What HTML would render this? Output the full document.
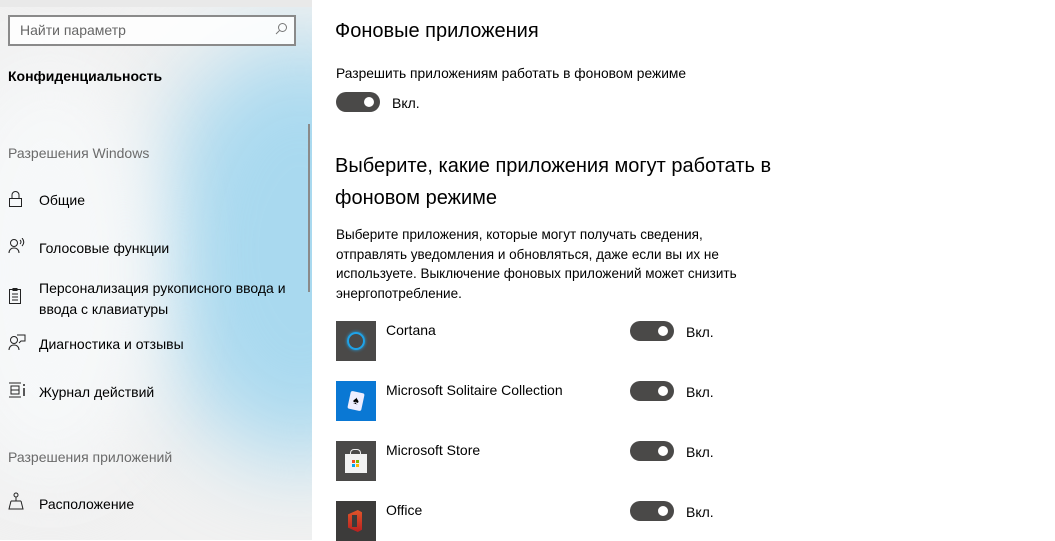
<!DOCTYPE html><html><head><meta charset="utf-8"><style>
body{margin:0;width:1055px;height:540px;overflow:hidden;font-family:"Liberation Sans","Noto Sans CJK SC",sans-serif;background:#fff;position:relative;color:#000}
#side{position:absolute;left:0;top:0;width:312px;height:540px;background:#f1f1f1;overflow:hidden}
#blob{position:absolute;left:150px;top:40px;width:300px;height:420px;border-radius:50%;background:#a9d9ef;filter:blur(45px)}
#blob2{position:absolute;left:-60px;top:60px;width:220px;height:420px;border-radius:50%;background:#f6f8f9;filter:blur(40px)}
.a{position:absolute;font-size:14px;white-space:nowrap}
.g{color:#6b6b6b}
.ic{position:absolute;left:8px}
.tg{position:absolute;width:44px;height:20px;border-radius:10px;background:#4a4948}
.tg:after{content:"";position:absolute;right:6px;top:5px;width:10px;height:10px;border-radius:50%;background:#fff}
.app{position:absolute;left:336px;width:40px;height:40px}
</style></head><body>
<div id="side"><div id="blob"></div><div id="blob2"></div>
<div style="position:absolute;left:0;top:0;width:312px;height:7px;background:#e9e9e9"></div>
<div style="position:absolute;left:8px;top:15px;width:284px;height:27px;border:2px solid #8a8a8a;background:rgba(255,255,255,.85)"></div>
<div class="a g" style="left:20px;top:22px;color:#666">Найти параметр</div>
<svg style="position:absolute;left:274px;top:22px" width="14" height="14" viewBox="0 0 14 14"><circle cx="8.5" cy="5.5" r="4" fill="none" stroke="#777"/><path d="M5.5 8.5L2 12" stroke="#777"/></svg>
<div class="a" style="left:8px;top:68px;font-weight:bold">Конфиденциальность</div>
<div style="position:absolute;left:308px;top:124px;width:2px;height:168px;background:#8a8a8a"></div>
<div class="a g" style="left:8px;top:145px">Разрешения Windows</div>
<svg class="ic" style="top:190px" width="16" height="18" viewBox="0 0 16 18"><rect x="1.5" y="8.5" width="12" height="8" fill="none" stroke="#222"/><path d="M4 8.5V5a3.5 3.5 0 0 1 7 0v3.5" fill="none" stroke="#222"/></svg>
<div class="a" style="left:39px;top:192px">Общие</div>
<svg class="ic" style="top:238px" width="18" height="16" viewBox="0 0 18 16"><circle cx="6" cy="5" r="3.5" fill="none" stroke="#222"/><path d="M1 15c0-3 2-5 5-5s5 2 5 5" fill="none" stroke="#222"/><path d="M12 2q2 2 0 4M14 0q3.5 4 0 8" fill="none" stroke="#222"/></svg>
<div class="a" style="left:39px;top:240px">Голосовые функции</div>
<svg class="ic" style="top:287px" width="14" height="17" viewBox="0 0 14 17"><rect x="1.5" y="2.5" width="11" height="14" fill="none" stroke="#222"/><rect x="4.5" y="1" width="5" height="3" fill="#222"/><path d="M4 7h6M4 10h6M4 13h6" stroke="#222"/></svg>
<div class="a" style="left:39px;top:278px;line-height:21px;white-space:normal;width:260px">Персонализация рукописного ввода и ввода с клавиатуры</div>
<svg class="ic" style="top:334px" width="18" height="17" viewBox="0 0 18 17"><circle cx="6" cy="6" r="3.5" fill="none" stroke="#222"/><path d="M1 16c0-3 2-5 5-5s5 2 5 5" fill="none" stroke="#222"/><path d="M9 1h8v6h-4l-2 2" fill="none" stroke="#222"/></svg>
<div class="a" style="left:39px;top:336px">Диагностика и отзывы</div>
<svg class="ic" style="top:382px" width="18" height="16" viewBox="0 0 18 16"><path d="M1 1h12M1 15h12M3 4h8v8H3zM3 8h8" fill="none" stroke="#222"/><path d="M16 2v2M16 6v8" stroke="#222" stroke-width="1.5"/></svg>
<div class="a" style="left:39px;top:384px">Журнал действий</div>
<div class="a g" style="left:8px;top:449px">Разрешения приложений</div>
<svg class="ic" style="top:492px" width="16" height="18" viewBox="0 0 16 18"><circle cx="8" cy="3" r="2" fill="none" stroke="#222"/><path d="M8 5v4M3 9h10M3 9l-2 8h14l-2-8" fill="none" stroke="#222"/></svg>
<div class="a" style="left:39px;top:496px">Расположение</div>
</div>
<div class="a" style="left:335px;top:20px;font-size:20px">Фоновые приложения</div>
<div class="a" style="left:336px;top:66px;font-size:13.8px">Разрешить приложениям работать в фоновом режиме</div>
<div class="tg" style="left:336px;top:92px"></div><div class="a" style="left:392px;top:95px">Вкл.</div>
<div class="a" style="left:335px;top:150px;font-size:20px;line-height:32px;white-space:normal;width:450px">Выберите, какие приложения могут работать в фоновом режиме</div>
<div class="a" style="left:336px;top:225px;font-size:13.5px;line-height:19.5px;white-space:normal;width:430px">Выберите приложения, которые могут получать сведения, отправлять уведомления и обновляться, даже если вы их не используете. Выключение фоновых приложений может снизить энергопотребление.</div>
<div class="app" style="top:321px;background:#4a4948"><div style="position:absolute;left:11px;top:11px;width:14px;height:14px;border:2.5px solid #1fa3e8;border-radius:50%;box-shadow:0 0 3px #1fa3e8"></div></div>
<div class="app" style="top:381px;background:#0a78d4"><div style="position:absolute;left:13px;top:11px;width:14px;height:18px;background:#eef;transform:rotate(12deg);border-radius:2px;text-align:center;font-size:11px;line-height:18px">♠</div></div>
<div class="app" style="top:441px;background:#4a4948"><div style="position:absolute;left:9px;top:13px;width:22px;height:19px;background:#f2f2f2"><div style="position:absolute;left:7px;top:6px;width:3px;height:3px;background:#f25022;box-shadow:4px 0 #7fba00,0 4px #00a4ef,4px 4px #ffb900"></div></div><div style="position:absolute;left:14px;top:8px;width:9px;height:6px;border:1.5px solid #eee;border-bottom:none;border-radius:4px 4px 0 0"></div></div>
<div class="app" style="top:501px;background:#3c3b3a"><div style="position:absolute;left:12px;top:9px;width:14px;height:22px;background:linear-gradient(#e0552a,#b82020);clip-path:polygon(0 20%,70% 0,100% 10%,100% 90%,70% 100%,0 80%)"></div><div style="position:absolute;left:16px;top:14px;width:5px;height:12px;background:#3c3b3a"></div></div>
<div class="a" style="left:386px;top:322px">Cortana</div>
<div class="a" style="left:386px;top:382px">Microsoft Solitaire Collection</div>
<div class="a" style="left:386px;top:442px">Microsoft Store</div>
<div class="a" style="left:386px;top:502px">Office</div>
<div class="tg" style="left:630px;top:321px"></div><div class="a" style="left:686px;top:324px">Вкл.</div>
<div class="tg" style="left:630px;top:381px"></div><div class="a" style="left:686px;top:384px">Вкл.</div>
<div class="tg" style="left:630px;top:441px"></div><div class="a" style="left:686px;top:444px">Вкл.</div>
<div class="tg" style="left:630px;top:501px"></div><div class="a" style="left:686px;top:504px">Вкл.</div>
</body></html>
